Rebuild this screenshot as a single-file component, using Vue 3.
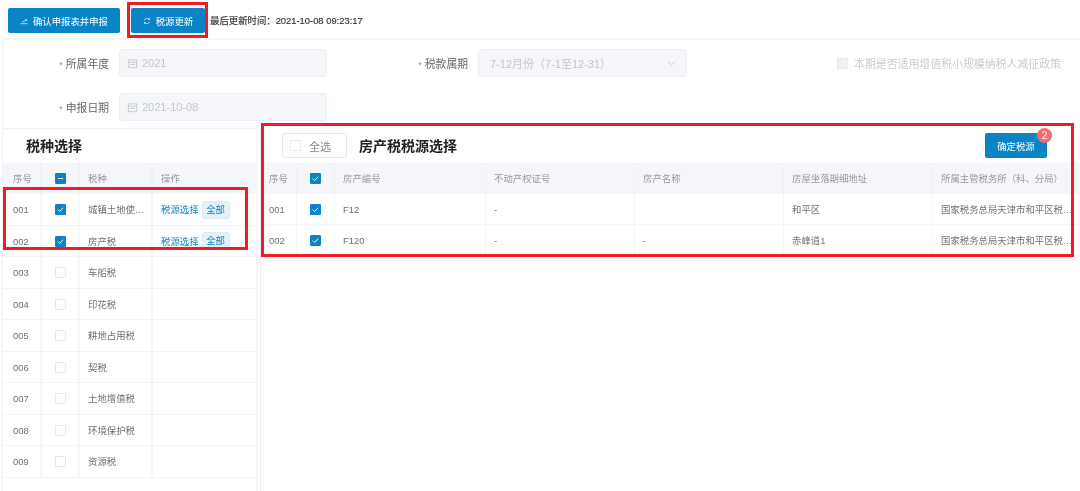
<script setup>
const taxRows = [
  { no: '001', name: '城镇土地使用税', checked: true, action: true },
  { no: '002', name: '房产税', checked: true, action: true },
  { no: '003', name: '车船税' },
  { no: '004', name: '印花税' },
  { no: '005', name: '耕地占用税' },
  { no: '006', name: '契税' },
  { no: '007', name: '土地增值税' },
  { no: '008', name: '环境保护税' },
  { no: '009', name: '资源税' }
]
const sourceHead = ['房产编号', '不动产权证号', '房产名称', '房屋坐落期细地址', '所属主管税务所（科、分局）']
const office = '国家税务总局天津市和平区税务局第一税务所'
const sourceRows = [
  { no: '001', cells: ['F12', '-', '', '和平区', office] },
  { no: '002', cells: ['F120', '-', '-', '赤峰道1', office] }
]
</script>

<template>
  <div class="page">
    <div class="toolbar">
      <button class="btn btn-wide">
        <svg class="btn-icon" viewBox="0 0 12 12"><path d="M1 10h10M3 8l3-1.5L9 4.5M7.5 4H10v2.2" fill="none" stroke="#fff" stroke-width="1"/></svg>
        确认申报表并申报
      </button>
      <button class="btn btn-refresh">
        <svg class="btn-icon" viewBox="0 0 12 12"><path d="M2.2 5A4 4 0 0 1 9.4 3.6M9.8 7A4 4 0 0 1 2.6 8.4M9.8 1.6v2.2H7.6M2.2 10.4V8.2h2.2" fill="none" stroke="#fff" stroke-width="1"/></svg>
        税源更新
      </button>
      <span class="update-time">最后更新时间：2021-10-08 09:23:17</span>
    </div>

    <div class="form">
      <div class="form-row">
        <label class="field-label"><i>*</i> 所属年度</label>
        <div class="input">
          <svg class="cal" viewBox="0 0 12 12"><path d="M1.5 2h9v8.5h-9zM1.5 4.5h9M3.5 7h5" fill="none" stroke="#c3c6cf" stroke-width="1"/></svg>
          2021
        </div>
        <label class="field-label field-label-2"><i>*</i> 税款属期</label>
        <div class="input select">
          7-12月份（7-1至12-31）
          <svg class="chev" viewBox="0 0 10 6"><path d="M1 1l4 4 4-4" fill="none" stroke="#c3c6cf" stroke-width="1"/></svg>
        </div>
        <span class="policy"><span class="box box-disabled"></span>本期是否适用增值税小规模纳税人减征政策</span>
      </div>
      <div class="form-row">
        <label class="field-label"><i>*</i> 申报日期</label>
        <div class="input">
          <svg class="cal" viewBox="0 0 12 12"><path d="M1.5 2h9v8.5h-9zM1.5 4.5h9M3.5 7h5" fill="none" stroke="#c3c6cf" stroke-width="1"/></svg>
          2021-10-08
        </div>
      </div>
    </div>

    <div class="panels">
      <section class="left">
        <h2 class="left-title">税种选择</h2>
        <div class="lrow lhead">
          <div>序号</div>
          <div class="center"><span class="box box-on"><span class="minus"></span></span></div>
          <div>税种</div>
          <div>操作</div>
        </div>
        <div v-for="r in taxRows" :key="r.no" class="lrow">
          <div>{{ r.no }}</div>
          <div class="center">
            <span v-if="r.checked" class="box box-on"><svg viewBox="0 0 10 10"><path d="M2 5l2.2 2.2L8 3" fill="none" stroke="#fff" stroke-width="1"/></svg></span>
            <span v-else class="box"></span>
          </div>
          <div class="ellipsis tax-name">{{ r.name }}</div>
          <div class="ops">
            <template v-if="r.action">
              <a class="link">税源选择</a><span class="tag">全部</span>
            </template>
          </div>
        </div>
        <div class="left-end"></div>
      </section>

      <section class="right">
        <div class="right-top">
          <div class="all-btn"><span class="box"></span>全选</div>
          <h2 class="right-title">房产税税源选择</h2>
          <button class="btn btn-confirm">确定税源<span class="badge">2</span></button>
        </div>
        <div class="rrow rhead">
          <div class="no">序号</div>
          <div class="center"><span class="box box-on"><svg viewBox="0 0 10 10"><path d="M2 5l2.2 2.2L8 3" fill="none" stroke="#fff" stroke-width="1"/></svg></span></div>
          <div v-for="h in sourceHead" :key="h" class="ellipsis">{{ h }}</div>
        </div>
        <div v-for="r in sourceRows" :key="r.no" class="rrow">
          <div class="no">{{ r.no }}</div>
          <div class="center"><span class="box box-on"><svg viewBox="0 0 10 10"><path d="M2 5l2.2 2.2L8 3" fill="none" stroke="#fff" stroke-width="1"/></svg></span></div>
          <div v-for="(c, i) in r.cells" :key="i" class="ellipsis">{{ c }}</div>
        </div>
      </section>
    </div>

    <div class="mark mark-btn"></div>
    <div class="mark mark-left"></div>
    <div class="mark mark-right"></div>
  </div>
</template>

<style scoped>
.page {
  position: relative;
  width: 1080px;
  height: 491px;
  overflow: hidden;
  background: #fff;
  color: #707070;
  font-family: "Liberation Sans", "Noto Sans CJK SC", sans-serif;
  font-size: 9.4px;
  filter: blur(0.3px);
}
.toolbar {
  height: 40px;
  box-sizing: border-box;
  margin-left: 2px;
  padding: 8px 0 0 6px;
  display: flex;
  align-items: flex-start;
  border-bottom: 2px solid #f5f6fa;
}
.btn {
  height: 25px;
  border: 0;
  border-radius: 2px;
  background: #0a84c6;
  color: #fff;
  font: inherit;
  padding: 0;
  display: inline-flex;
  align-items: center;
  justify-content: center;
}
.btn-wide { width: 112px; gap: 5px; }
.btn-refresh { width: 74px; margin-left: 11px; gap: 5px; }
.btn-icon { width: 8px; height: 8px; }
.update-time {
  margin-left: 5px;
  line-height: 25px;
  color: #333;
  -webkit-text-stroke: 0.15px #333;
}
.form { height: 88px; box-sizing: border-box; padding-top: 9px; border-left: 2px solid #f5f6fa; margin-left: 2px; }
.form-row { display: flex; align-items: center; height: 28px; margin-bottom: 16px; }
.field-label { width: 105px; text-align: right; font-size: 10.8px; color: #666; margin-right: 10px; flex: none; }
.field-label i { color: #f56c6c; font-style: normal; font-size: 9px; }
.field-label-2 { width: 72px; margin-left: 69px; margin-right: 10px; }
.input {
  width: 208px;
  height: 28px;
  box-sizing: border-box;
  background: #f5f6fa;
  border: 1px solid #eceef3;
  border-radius: 3px;
  color: #c3c6cf;
  font-size: 11px;
  display: flex;
  align-items: center;
  padding-left: 7px;
  flex: none;
}
.cal { width: 11px; height: 11px; margin-right: 4px; }
.select { width: 209px; padding-left: 11px; justify-content: space-between; padding-right: 10px; }
.chev { width: 9px; height: 6px; }
.policy { margin-left: 150px; display: flex; align-items: center; color: #c9ccd4; font-size: 10.9px; white-space: nowrap; }
.policy .box { margin-right: 6px; }

.box {
  display: inline-flex;
  align-items: center;
  justify-content: center;
  width: 11px;
  height: 11px;
  box-sizing: border-box;
  border: 1px solid #e6e8ee;
  border-radius: 1px;
  background: #fff;
  flex: none;
}
.box-on { background: #0a84c6; border-color: #0a84c6; }
.box-on svg { width: 9px; height: 9px; }
.minus { width: 5px; height: 1px; background: #fff; }
.box-disabled { background: #eef0f6; }
.center { display: flex; align-items: center; justify-content: center; padding: 0 !important; }
.ellipsis { white-space: nowrap; overflow: hidden; text-overflow: ellipsis; }

.panels { display: flex; align-items: flex-start; }
.left { width: 254px; margin-left: 2px; border-top: 1px solid #f0f1f6; border-right: 2px solid #f5f6fa; box-shadow: 2px 0 0 #fff, 3px 0 0 #f0f1f6; border-left: 1px solid #f0f1f6; box-sizing: content-box; }
.left-title { height: 34px; line-height: 34px; margin: 0; padding-left: 23px; font-size: 14px; font-weight: 700; color: #222; }
.lrow {
  display: grid;
  grid-template-columns: 39px 38px 73px 1fr;
  height: 31.5px;
  box-sizing: border-box;
  border-bottom: 1px solid #f2f3f8;
  align-items: stretch;
}
.lrow > div { box-sizing: border-box; line-height: 31px; padding: 0 8px; border-right: 2px solid #f5f6fa; min-width: 0; }
.lrow > .center { display: flex; }
.lrow > div:first-child { padding: 0 0 0 10px; }
.lrow > div:last-child { border-right: 0; }
.lrow > .tax-name { padding-right: 3px; }
.lhead { background: #f5f6fa; color: #999; height: 31px; border-bottom: 0; }
.lhead > div { border-right-color: #eff1f6; }
.ops { display: flex !important; align-items: center; }
.link { color: #0a84c6; }
.tag {
  margin-left: 3px;
  width: 28px;
  height: 18px;
  text-align: center;
  background: #e4f1f8;
  border: 1px solid #d9ebf5;
  border-radius: 3px;
  color: #0a84c6;
  box-sizing: border-box;
  line-height: 16px;
}
.left-end { height: 20px; }

.right { width: 815px; margin-left: 7px; padding-top: 5px; }
.right-top { height: 30px; display: flex; align-items: flex-start; padding-left: 17px; box-sizing: border-box; }
.all-btn {
  width: 65px;
  height: 25px;
  box-sizing: border-box;
  border: 1px solid #e6e8ee;
  border-radius: 3px;
  display: flex;
  align-items: center;
  padding-left: 7px;
  gap: 8px;
  font-size: 11px;
  color: #888;
}
.right-title { margin: 0 0 0 12px; height: 25px; line-height: 27px; font-size: 14px; font-weight: 700; color: #222; }
.btn-confirm { position: relative; width: 62px; margin-left: auto; margin-right: 33px; }
.badge {
  position: absolute;
  top: -5px;
  right: -5px;
  width: 15px;
  height: 15px;
  line-height: 15px;
  border-radius: 50%;
  background: #f56c6c;
  color: #fff;
  font-size: 10px;
  text-align: center;
}
.rrow {
  display: grid;
  grid-template-columns: 32px 38px 151px 149px 149px 149px 147px;
  height: 31px;
  box-sizing: border-box;
  border-bottom: 1px solid #f5f6fa;
}
.rrow > div { box-sizing: border-box; line-height: 31px; padding: 0 8px; border-right: 1px solid #f5f6fa; min-width: 0; }
.rrow > .no { padding: 0 0 0 4px; }
.rrow > div:last-child { border-right: 0; padding-right: 0; }
.rhead { background: #f5f6fa; color: #999; border-bottom: 0; }
.rhead > div { border-right-color: #eff1f6; }

.mark { position: absolute; box-sizing: border-box; border: 3px solid #ee1c25; pointer-events: none; }
.mark-btn { left: 127px; top: 2px; width: 81px; height: 36px; }
.mark-left { left: 3px; top: 187px; width: 245px; height: 63px; }
.mark-right { left: 261px; top: 123px; width: 813px; height: 134px; }
</style>
